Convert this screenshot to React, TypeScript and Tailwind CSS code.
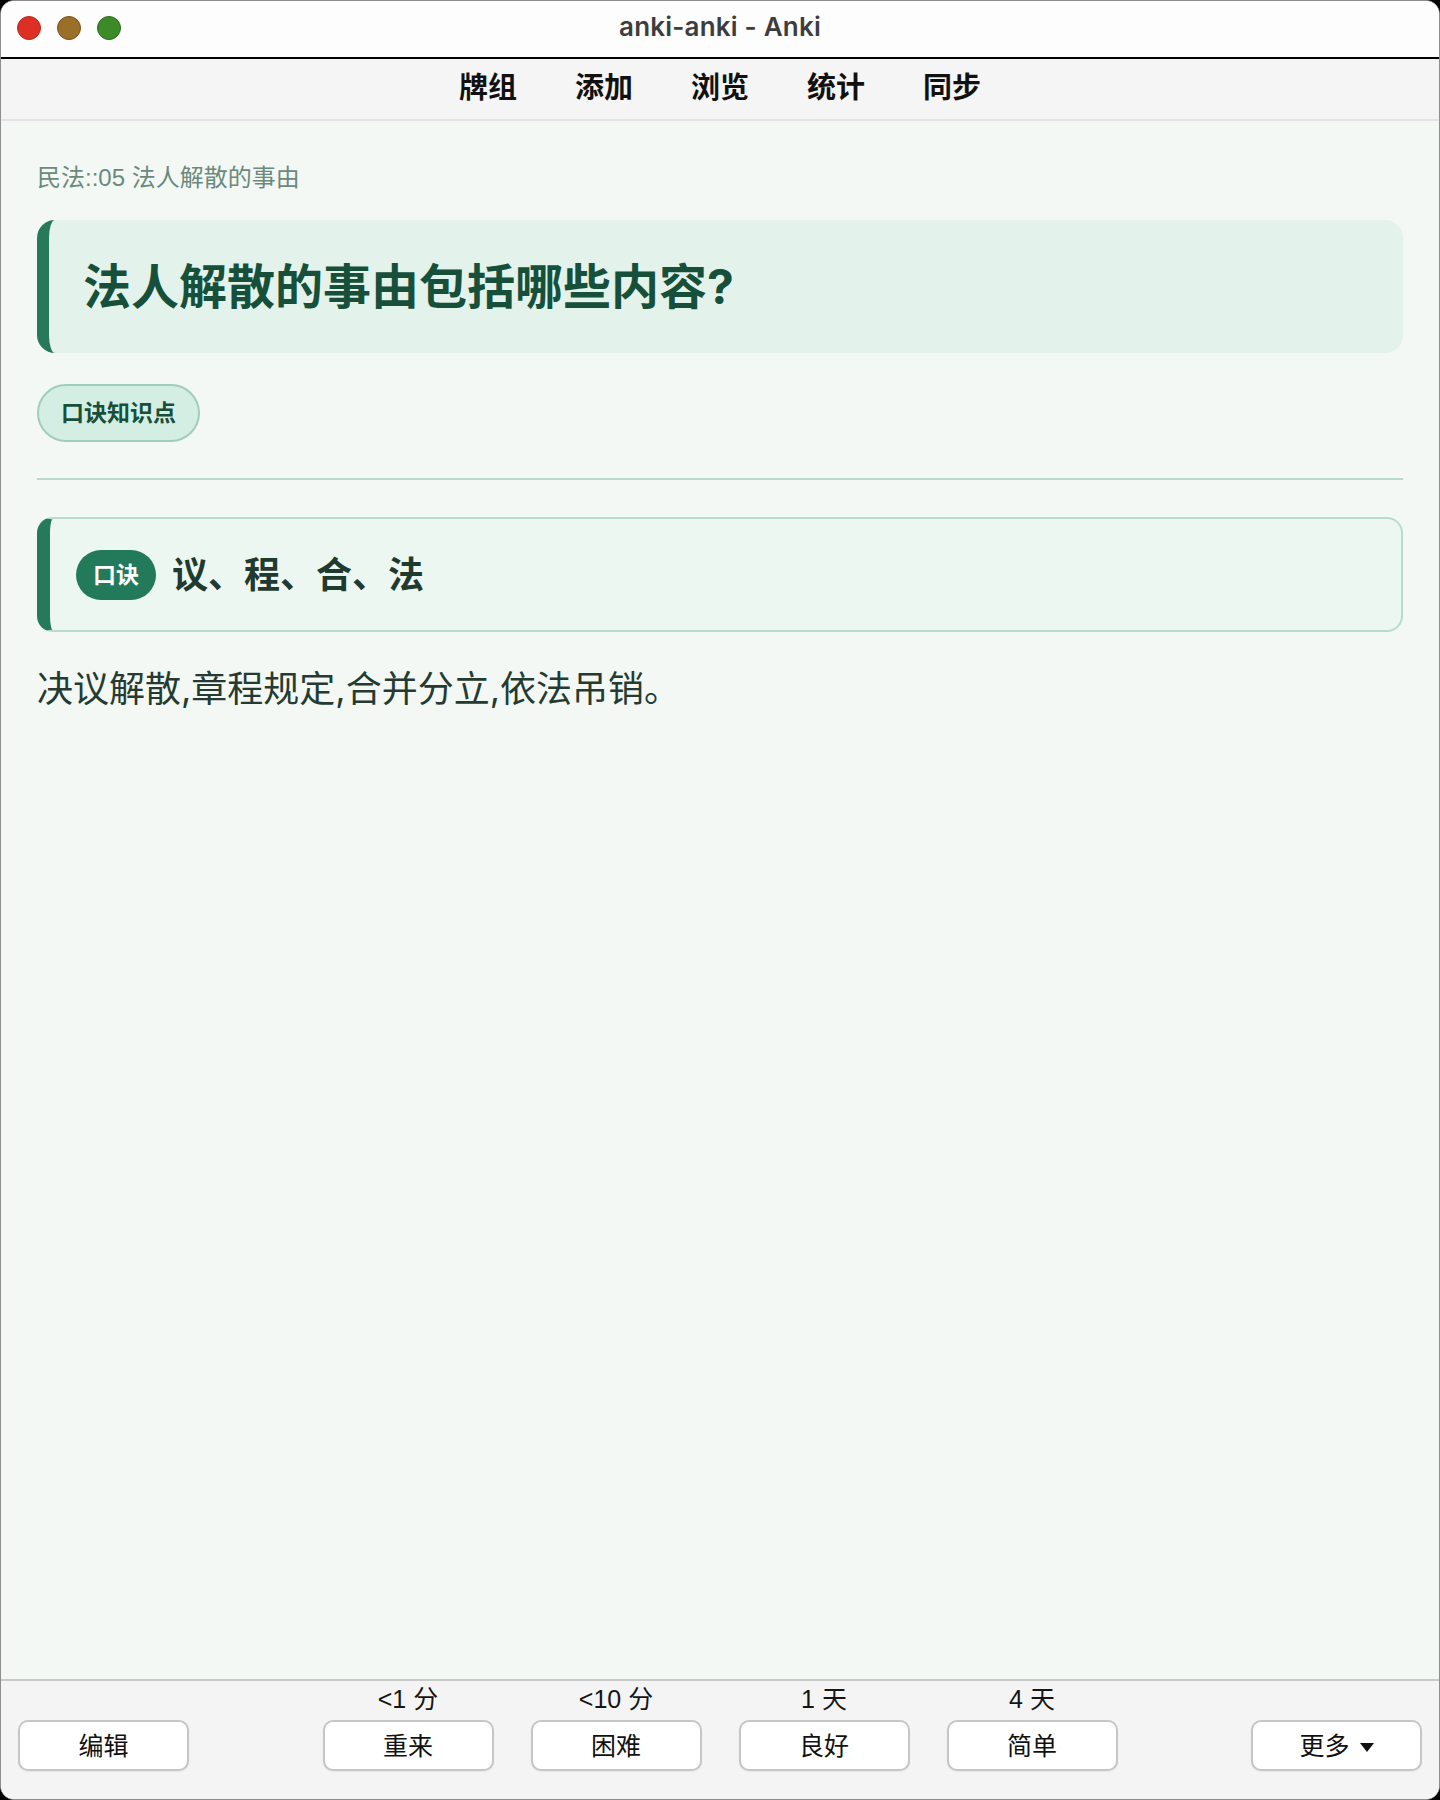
import { useState } from "react";

const cjk = "font-['Inter','Noto_Sans_CJK_SC',sans-serif]";
const helv = "font-['Liberation_Sans','Noto_Sans_CJK_SC',sans-serif]";

const answers = [
  { label: "<1 分", text: "重来" },
  { label: "<10 分", text: "困难" },
  { label: "1 天", text: "良好" },
  { label: "4 天", text: "简单" },
];

const menu = ["牌组", "添加", "浏览", "统计", "同步"];

function TrafficLights() {
  return (
    <div className="absolute left-[16px] top-[15px] flex items-center gap-[16px]">
      <span className="h-[24px] w-[24px] rounded-full border-[1.5px] border-[#b8281f] bg-[#de2f25]" />
      <span className="h-[24px] w-[24px] rounded-full border-[1.5px] border-[#785017] bg-[#9a6f27]" />
      <span className="h-[24px] w-[24px] rounded-full border-[1.5px] border-[#2b6a1c] bg-[#3d8a28]" />
    </div>
  );
}

function ReviewButton({ children }: { children: React.ReactNode }) {
  return (
    <button
      type="button"
      className={`flex h-[51px] w-[171px] items-center justify-center gap-[10px] rounded-[10px] border-2 border-[#c6c6c6] bg-white text-[25px] leading-none text-[#111] shadow-[0_1px_2px_rgba(0,0,0,0.06)] ${cjk}`}
    >
      {children}
    </button>
  );
}

export default function App() {
  const [active] = useState("牌组");

  return (
    <div className="h-[1800px] w-[1440px] bg-black">
      <div className="flex h-full w-full flex-col overflow-hidden rounded-[14px] border border-[#8e8e8e] bg-[#f3f8f5]">
        {/* title bar */}
        <div className="relative flex h-[56px] shrink-0 items-center justify-center bg-[#fdfdfd] pb-[6px]">
          <TrafficLights />
          <span className="font-['Inter',sans-serif] text-[26px] font-semibold tracking-[0.2px] text-[#3d3d3d]">
            anki-anki - Anki
          </span>
        </div>
        <div className="h-[2px] shrink-0 bg-black" />

        {/* toolbar */}
        <nav className="flex h-[62px] shrink-0 items-center justify-center gap-[58px] border-b-2 border-[#e3e3e3] bg-[#f5f5f5] pb-[7px]">
          {menu.map((item) => (
            <span
              key={item}
              data-active={item === active}
              className="font-['Noto_Sans_CJK_SC',sans-serif] text-[29px] font-bold leading-none text-[#111]"
            >
              {item}
            </span>
          ))}
        </nav>

        {/* card */}
        <main className="flex flex-1 flex-col px-[36px] pt-[42px]">
          <div className={`text-[24px] leading-[30px] text-[#6b897c] ${helv}`}>
            民法::05 法人解散的事由
          </div>

          <div className="mt-[27px] flex h-[133px] items-center rounded-[18px] border-l-[12px] border-[#267a5a] bg-[#e3f2eb] pl-[34px]">
            <h1 className={`text-[48px] font-bold leading-none text-[#17503a] ${cjk}`}>
              法人解散的事由包括哪些内容?
            </h1>
          </div>

          <div className="mt-[31px] flex">
            <span
              className={`flex h-[58px] items-center rounded-full border-2 border-[#9fcfb9] bg-[#d5eee4] px-[22px] text-[23px] font-bold leading-none text-[#17503a] ${cjk}`}
            >
              口诀知识点
            </span>
          </div>

          <div className="mt-[36px] h-[2px] bg-[#b9dacb]" />

          <div className="mt-[37px] flex h-[115px] items-center gap-[16px] rounded-[16px] border-2 border-l-[13px] border-[#b7dccb] border-l-[#247a5a] bg-[#edf7f2] pl-[26px]">
            <span
              className={`flex h-[50px] w-[80px] items-center justify-center rounded-full bg-[#237a5a] pt-[2px] text-[23px] font-bold leading-none text-white ${cjk}`}
            >
              口诀
            </span>
            <span className={`text-[36px] font-bold leading-none text-[#1f3a2f] ${cjk}`}>
              议、程、合、法
            </span>
          </div>

          <p className={`mt-[32px] text-[36px] leading-[50px] text-[#253b31] ${cjk}`}>
            决议解散,章程规定,合并分立,依法吊销。
          </p>
        </main>

        {/* answer bar */}
        <footer className="flex h-[120px] shrink-0 items-end justify-between border-t-2 border-[#c9c9c9] bg-[#f4f4f4] px-[17px] pb-[28px]">
          <ReviewButton>
            <span className="pt-[2px]">编辑</span>
          </ReviewButton>
          <div className="flex items-end gap-[37px]">
            {answers.map((a) => (
              <div key={a.text} className="flex flex-col items-center">
                <span className={`mb-[6px] text-[25px] leading-[30px] text-[#151515] ${helv}`}>
                  {a.label}
                </span>
                <ReviewButton>
                  <span className="pt-[2px]">{a.text}</span>
                </ReviewButton>
              </div>
            ))}
          </div>
          <ReviewButton>
            <span className="pt-[2px]">更多</span>
            <svg width="14" height="9" viewBox="0 0 14 9" className="mt-[3px]">
              <path d="M0 0 H14 L7 9 Z" fill="#111" />
            </svg>
          </ReviewButton>
        </footer>
      </div>
    </div>
  );
}
